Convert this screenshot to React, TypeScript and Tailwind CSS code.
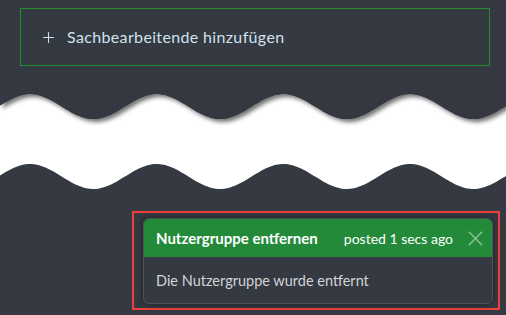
import { Plus } from 'lucide-react'

const P = 126.67
const A = 12.5

function wave(base: number) {
  const pts: string[] = []
  for (let x = 0; x <= 506; x += 2) {
    const y = base - A * Math.cos((2 * Math.PI * (x - 30)) / P)
    pts.push(`${x},${y.toFixed(2)}`)
  }
  return pts
}

function TornEdge() {
  const top = wave(105.5)
  const bottom = wave(175.5)
  const band = `M${top.join(' L')} L${[...bottom].reverse().join(' L')} Z`
  const upper = `M0,70 L${top.join(' L')} L506,70 Z`
  return (
    <svg width="506" height="120" viewBox="0 80 506 120" className="block">
      <defs>
        <filter id="tear-shadow" x="-10%" y="-50%" width="120%" height="200%">
          <feDropShadow dx="3" dy="3" stdDeviation="2.2" floodColor="#000" floodOpacity="0.55" />
        </filter>
      </defs>
      <path d={band} fill="#ffffff" />
      <path d={upper} fill="#353941" filter="url(#tear-shadow)" />
    </svg>
  )
}

export default function App() {
  return (
    <div className="w-[506px] h-[315px] bg-[#353941] overflow-hidden">
      <div className="px-5 pt-2">
        <button className="w-[470px] h-[58px] border border-[#1f8f2f] flex items-center pl-[19px] gap-[10px] text-[#cfe2ee] text-[16px] tracking-[0.35px] font-['Lato',sans-serif]">
          <Plus size={17} strokeWidth={1.5} />
          <span>Sachbearbeitende hinzufügen</span>
        </button>
      </div>

      <div className="mt-[15px]">
        <TornEdge />
      </div>

      <div className="flex justify-end pr-[6px] mt-[10px]">
        <div className="w-[368px] h-[99px] border-2 border-[#f03e3e] pl-[9px] pr-[5px] pt-[5px]">
          <div className="w-[350px] h-[86px] rounded-md border border-[#4d5259] bg-[#353941] overflow-hidden shadow-[0_0_6px_rgba(0,0,0,0.45)] font-['Lato',sans-serif]">
            <div className="h-[38px] bg-[#228a39] flex items-center pl-3 pr-[9px] text-white">
              <span className="font-bold text-[15px]">Nutzergruppe entfernen</span>
              <span className="ml-auto text-[14px]">posted 1 secs ago</span>
              <svg width="15" height="15" viewBox="0 0 15 15" className="ml-[15px]">
                <path d="M0.8 0.8 L14.2 14.2 M14.2 0.8 L0.8 14.2" stroke="#8fc29a" strokeWidth="1.4" />
              </svg>
            </div>
            <div className="h-[47px] flex items-center pl-3 text-[14.5px] text-[#d2d4d7]">
              Die Nutzergruppe wurde entfernt
            </div>
          </div>
        </div>
      </div>
    </div>
  )
}
